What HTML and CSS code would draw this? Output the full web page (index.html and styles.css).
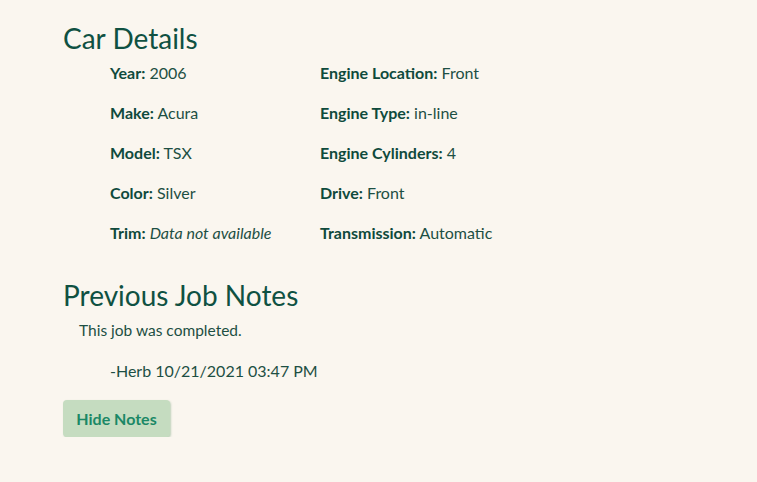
FILE: index.html
```html
<!DOCTYPE html>
<html lang="en">
<head>
<meta charset="utf-8">
<title>Car Details</title>
<link rel="stylesheet" href="styles.css">
</head>
<body>
<main class="page">
  <section class="section">
    <h2 class="heading">Car Details</h2>
    <div class="details">
      <div class="col">
        <p class="item"><b>Year:</b> 2006</p>
        <p class="item"><b>Make:</b> Acura</p>
        <p class="item"><b>Model:</b> TSX</p>
        <p class="item"><b>Color:</b> Silver</p>
        <p class="item"><b>Trim:</b> <i>Data not available</i></p>
      </div>
      <div class="col">
        <p class="item"><b>Engine Location:</b> Front</p>
        <p class="item"><b>Engine Type:</b> in-line</p>
        <p class="item"><b>Engine Cylinders:</b> 4</p>
        <p class="item"><b>Drive:</b> Front</p>
        <p class="item"><b>Transmission:</b> Automatic</p>
      </div>
    </div>
  </section>
  <section class="section">
    <h2 class="heading">Previous Job Notes</h2>
    <p class="note">This job was completed.</p>
    <p class="sig">-Herb 10/21/2021 03:47 PM</p>
    <button class="btn" type="button">Hide Notes</button>
  </section>
</main>
</body>
</html>
```
FILE: styles.css
```css
html, body {
  margin: 0;
  background: #faf6ef;
}
body {
  font-family: Lato, "Noto Sans", sans-serif;
  color: #1d4f43;
}
.page {
  padding: 23px 0 0 63px;
}
.heading {
  margin: 0;
  font-size: 28px;
  font-weight: 400;
  color: #0f5142;
  line-height: 30px;
}
.details {
  display: flex;
  padding-left: 47px;
  margin-bottom: 27px;
}
.col {
  width: 210px;
}
.item {
  margin: 0;
  font-size: 16px;
  line-height: 40px;
}
.item b {
  color: #0f4a3c;
}
.note {
  margin: 10px 0 0 16px;
  font-size: 15.5px;
  line-height: 20px;
}
.sig {
  margin: 21px 0 0 47px;
  font-size: 16px;
  line-height: 20px;
}
.btn {
  display: block;
  margin-top: 19px;
  width: 107px;
  height: 37px;
  border: none;
  border-radius: 4px;
  background: #c5dcc0;
  color: #1b8866;
  font-family: Lato, "Noto Sans", sans-serif;
  font-weight: 700;
  font-size: 16px;
  box-shadow: 1px 1px 2px rgba(80, 140, 90, 0.35);
  padding: 0;
}
```
